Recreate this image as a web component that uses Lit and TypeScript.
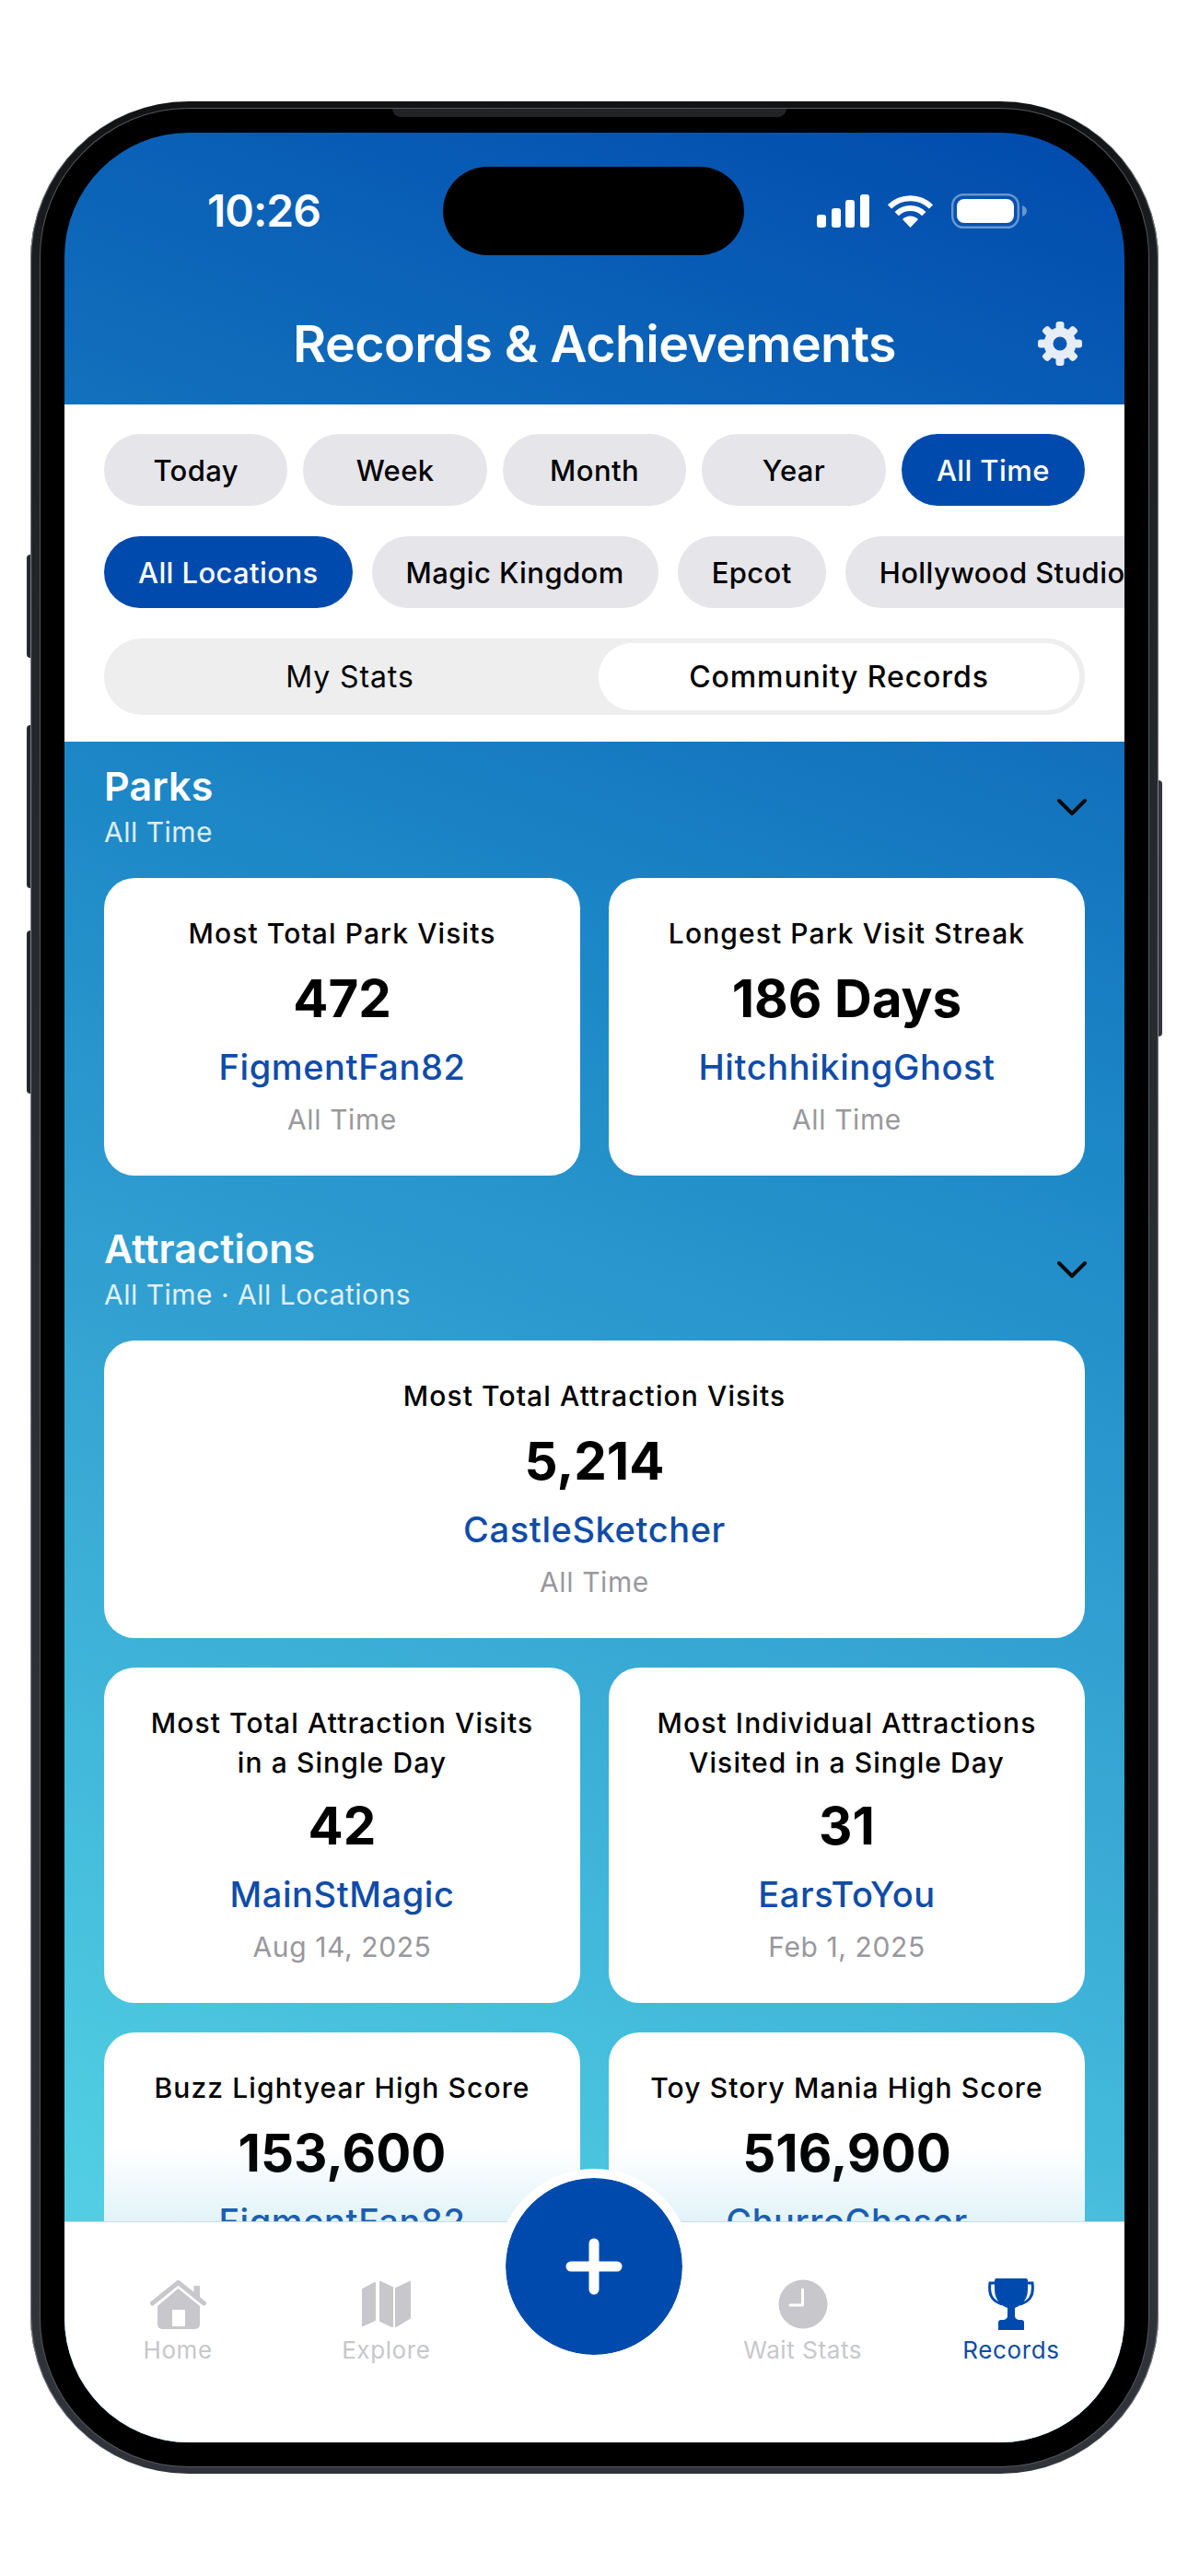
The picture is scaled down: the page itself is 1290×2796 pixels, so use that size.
import { LitElement, html, css, svg } from "lit";
import { customElement } from "lit/decorators.js";

const gearTeeth = [0, 45, 90, 135, 180, 225, 270, 315];

interface Rec { title: string[]; value: string; name: string; sub: string; }

const parks: Rec[] = [
  { title: ["Most Total Park Visits"], value: "472", name: "FigmentFan82", sub: "All Time" },
  { title: ["Longest Park Visit Streak"], value: "186 Days", name: "HitchhikingGhost", sub: "All Time" },
];
const big: Rec = { title: ["Most Total Attraction Visits"], value: "5,214", name: "CastleSketcher", sub: "All Time" };
const attractions: Rec[] = [
  { title: ["Most Total Attraction Visits", "in a Single Day"], value: "42", name: "MainStMagic", sub: "Aug 14, 2025" },
  { title: ["Most Individual Attractions", "Visited in a Single Day"], value: "31", name: "EarsToYou", sub: "Feb 1, 2025" },
  { title: ["Buzz Lightyear High Score"], value: "153,600", name: "FigmentFan82", sub: "All Time" },
  { title: ["Toy Story Mania High Score"], value: "516,900", name: "ChurroChaser", sub: "All Time" },
];

@customElement("app-root")
export class AppRoot extends LitElement {
  static styles = css`
    :host {
      display: block;
      width: 1290px;
      height: 2796px;
      background: #fff;
      font-family: Inter, "Liberation Sans", sans-serif;
      padding: 110px 0 0 33px;
      box-sizing: border-box;
      overflow: hidden;
      color: #000;
    }
    .device {
      position: relative;
      width: 1225px;
      height: 2575px;
      box-sizing: border-box;
      padding: 8px 11px;
      border-radius: 172px;
      background: linear-gradient(180deg, #111214 0%, #1e2023 8%, #2b2e33 50%, #30333a 100%);
      box-shadow: inset 2px 0 1px -1px #85878c, inset -2px 0 1px -1px #85878c;
    }
    .btn {
      position: absolute;
      background: #26282c;
      border-radius: 4px 0 0 4px;
      left: -4px;
      width: 4px;
    }
    .b1 { top: 492px; height: 112px; }
    .b2 { top: 677px; height: 177px; }
    .b3 { top: 900px; height: 177px; }
    .b4 { left: auto; right: -4px; top: 737px; height: 278px; border-radius: 0 4px 4px 0; background: #33363b; }
    .bezel {
      position: relative;
      height: 100%;
      box-sizing: border-box;
      padding: 26px;
      background: #000;
      border-radius: 161px;
      box-shadow: 0 0 0 1px #55575b;
    }
    .speaker {
      position: absolute;
      top: 0;
      left: 382px;
      width: 428px;
      height: 9px;
      background: #222326;
      border-radius: 0 0 12px 12px;
    }
    .screen {
      position: relative;
      height: 100%;
      display: flex;
      flex-direction: column;
      overflow: hidden;
      border-radius: 135px;
      background: linear-gradient(200deg, #004aad 0%, #1c86c6 37%, #35a5d3 60%, #5adce8 100%);
    }
    .island {
      position: absolute;
      top: 37px;
      left: 411px;
      width: 327px;
      height: 96px;
      border-radius: 48px;
      background: #000;
    }
    .header { flex: none; height: 295px; color: #fff; }
    .status {
      display: flex;
      justify-content: space-between;
      align-items: center;
      height: 36px;
      padding: 67px 106px 0 155px;
    }
    .time { font-size: 48px; font-weight: 600; line-height: 36px; letter-spacing: -1px; }
    .status-icons { display: flex; align-items: center; gap: 19px; }
    .status-icons svg { display: block; }
    .title-row {
      display: grid;
      grid-template-columns: 1fr auto 1fr;
      align-items: center;
      height: 132px;
      margin-top: 60px;
      padding-right: 46px;
      padding-left: 46px;
    }
    .title { grid-column: 2; font-size: 55.5px; font-weight: 600; letter-spacing: -0.6px; white-space: nowrap; padding-bottom: 2px; }
    .gear { grid-column: 3; justify-self: end; display: block; }

    .panel {
      flex: none;
      height: 366px;
      box-sizing: border-box;
      background: #fff;
      padding: 32px 0 0 43px;
      overflow: hidden;
    }
    .pills { display: flex; gap: 17px; width: 1065px; }
    .pills.loc { gap: 21px; width: auto; margin-top: 33px; }
    .pill {
      flex: none;
      height: 78px;
      display: flex;
      align-items: center;
      justify-content: center;
      border-radius: 39px;
      background: #e5e5ea;
      font-size: 31px;
      letter-spacing: 0.4px;
      font-weight: 500;
      white-space: nowrap;
    }
    .pills:not(.loc) .pill { flex: 1 1 0; }
    .loc .pill { padding: 0 37px; }
    .pill.on { background: #004aad; color: #fff; }
    .segment {
      display: grid;
      grid-template-columns: 537px 522px;
      width: 1065px;
      height: 83px;
      box-sizing: border-box;
      padding: 5px 6px 5px 0;
      margin-top: 33px;
      border-radius: 41px;
      background: #eeeeef;
      font-size: 32px;
      letter-spacing: 0.9px;
      font-weight: 500;
    }
    .segment div { display: flex; align-items: center; justify-content: center; border-radius: 36px; }
    .segment .on { background: #fff; }
    .segment .off { font-weight: 400; padding-right: 3px; }

    .content {
      flex: 1 1 0;
      min-height: 0;
      overflow: hidden;
      position: relative;
      padding: 23px 42px 0 43px;
    }
    .fade {
      position: absolute;
      left: 0;
      right: 0;
      top: 1525px;
      height: 82px;
      background: linear-gradient(180deg, rgba(90, 200, 225, 0), rgba(90, 190, 220, 0.18));
    }
    .sec-head {
      display: flex;
      align-items: center;
      justify-content: space-between;
      color: #fff;
      margin-bottom: 29px;
    }
    .sec-title { font-size: 43px; font-weight: 600; line-height: 50px; letter-spacing: 0.1px; }
    .sec-sub { font-size: 30px; letter-spacing: 0.5px; line-height: 42px; margin-top: 4px; opacity: 0.85; }
    .chev { display: block; margin-right: -2px; }
    .grid { display: grid; grid-template-columns: 517px 517px; gap: 32px 31px; }
    .grid + .sec-head { margin-top: 54px; }
    .card {
      background: #fff;
      border-radius: 33px;
      padding: 39px 10px 40px;
      text-align: center;
    }
    .card.wide { grid-column: 1 / span 2; }
    .c-title { font-size: 30px; letter-spacing: 1.1px; font-weight: 500; line-height: 43px; white-space: nowrap; }
    .c-value { font-size: 56.5px; font-weight: 700; line-height: 72px; margin-top: 13px; }
    .two .c-value { margin-top: 11px; }
    .c-name { font-size: 38px; letter-spacing: 0.6px; font-weight: 500; line-height: 50px; margin-top: 13px; color: #0f4ca8; }
    .c-sub { font-size: 30px; letter-spacing: 0.6px; line-height: 42px; margin-top: 11px; color: #98989d; }

    .tabbar {
      position: relative;
      flex: none;
      height: 240px;
      box-sizing: border-box;
      background: #fff;
      padding: 61px 10px 0;
      display: flex;
      border-top: 1px solid #c9dbe2;
    }
    .tab {
      flex: 1 1 0;
      display: flex;
      flex-direction: column;
      align-items: center;
      font-size: 26px;
      letter-spacing: 0.6px;
      line-height: 30px;
      color: #c7c7cc;
    }
    .tab .ic { height: 56px; margin-bottom: 7px; display: flex; align-items: center; justify-content: center; }
    .tab svg { display: block; }
    .tab.active { color: #0f4ca8; }
    .fab {
      position: absolute;
      left: 469px;
      top: -58px;
      width: 192px;
      height: 192px;
      border: 10px solid #fff;
      border-radius: 50%;
      background: #004aad;
      background-clip: padding-box;
      display: flex;
      align-items: center;
      justify-content: center;
    }
  `;

  private card(r: Rec, wide = false) {
    return html`<div class="card ${wide ? "wide" : ""} ${r.title.length > 1 ? "two" : ""}">
      <div class="c-title">${r.title.map((t) => html`<div>${t}</div>`)}</div>
      <div class="c-value">${r.value}</div>
      <div class="c-name">${r.name}</div>
      <div class="c-sub">${r.sub}</div>
    </div>`;
  }

  private head(title: string, sub: string) {
    return html`<div class="sec-head">
      <div>
        <div class="sec-title">${title}</div>
        <div class="sec-sub">${sub}</div>
      </div>
      <svg class="chev" width="34" height="22" viewBox="0 0 34 22" fill="none" stroke="#0a0a0a" stroke-width="4" stroke-linecap="round" stroke-linejoin="round"><path d="M3 4 L17 18 L31 4" /></svg>
    </div>`;
  }

  render() {
    return html`<div class="device">
      <div class="btn b1"></div><div class="btn b2"></div><div class="btn b3"></div><div class="btn b4"></div>
      <div class="bezel">
        <div class="speaker"></div>
        <div class="screen">
          <div class="header">
            <div class="status">
              <div class="time">10:26</div>
              <div class="status-icons">
                <svg width="57" height="36" viewBox="0 0 57 36" fill="#fff">
                  <rect x="0" y="22" width="10" height="14" rx="3" />
                  <rect x="16" y="15" width="10" height="21" rx="3" />
                  <rect x="31" y="6" width="10" height="30" rx="3" />
                  <rect x="47" y="0" width="10" height="36" rx="3" />
                </svg>
                <svg width="51" height="36" viewBox="0 0 51 36" fill="none" stroke="#fff" stroke-width="6">
                  <path d="M3 13.4 A32 32 0 0 1 48 13.4" />
                  <path d="M10.7 21.2 A21 21 0 0 1 40.3 21.2" />
                  <path d="M25.5 36 L17 27 A12 12 0 0 1 34 27 Z" fill="#fff" stroke="none" />
                </svg>
                <svg width="82" height="38" viewBox="0 0 82 38" fill="none">
                  <rect x="1.2" y="1.2" width="71.6" height="35.6" rx="12" stroke="#fff" stroke-opacity="0.4" stroke-width="2.4" />
                  <rect x="6" y="6" width="62" height="26" rx="8" fill="#fff" />
                  <path d="M77 13 C80 14 82 16 82 19 C82 22 80 24 77 25 Z" fill="#fff" fill-opacity="0.4" />
                </svg>
              </div>
            </div>
            <div class="title-row">
              <div class="title">Records &amp; Achievements</div>
              <svg class="gear" width="48" height="48" viewBox="0 0 48 48" fill="none">
                <circle cx="24" cy="24" r="12.5" stroke="#e6edf7" stroke-width="10" />
                ${gearTeeth.map((a) => svg`<rect x="19.5" y="0" width="9" height="10" rx="3" fill="#e6edf7" transform="rotate(${a} 24 24)" />`)}
              </svg>
            </div>
          </div>

          <div class="panel">
            <div class="pills">
              <div class="pill">Today</div>
              <div class="pill">Week</div>
              <div class="pill">Month</div>
              <div class="pill">Year</div>
              <div class="pill on">All Time</div>
            </div>
            <div class="pills loc">
              <div class="pill on">All Locations</div>
              <div class="pill">Magic Kingdom</div>
              <div class="pill">Epcot</div>
              <div class="pill">Hollywood Studios</div>
            </div>
            <div class="segment">
              <div class="off">My Stats</div>
              <div class="on">Community Records</div>
            </div>
          </div>

          <div class="content">
            ${this.head("Parks", "All Time")}
            <div class="grid">${parks.map((r) => this.card(r))}</div>
            ${this.head("Attractions", "All Time · All Locations")}
            <div class="grid">
              ${this.card(big, true)}
              ${attractions.map((r) => this.card(r))}
            </div>
            <div class="fade"></div>
          </div>

          <div class="tabbar">
            <div class="tab">
              <div class="ic">
                <svg width="61" height="53" viewBox="0 0 61 53">
                  <path d="M47.5 6 H54 V20 H47.5 Z" fill="#c7c7cc" />
                  <path d="M8 28 L30.5 9 L54 28 V48 A5 5 0 0 1 49 53 H13 A5 5 0 0 1 8 48 Z" fill="#c7c7cc" />
                  <path d="M2.5 25 L30.5 2.5 L58.5 25" fill="none" stroke="#c7c7cc" stroke-width="5" stroke-linecap="round" stroke-linejoin="round" />
                  <rect x="24" y="32" width="14" height="18" fill="#fff" />
                </svg>
              </div>
              Home
            </div>
            <div class="tab">
              <div class="ic">
                <svg width="54" height="50" viewBox="0 0 54 50" fill="#c7c7cc" stroke="#c7c7cc" stroke-width="2" stroke-linejoin="round">
                  <path d="M2 9 L15 2 V42 L2 48 Z" />
                  <path d="M21 1 L34 7 V49 L21 43 Z" />
                  <path d="M38 8 L53 1 V40 L38 49 Z" />
                </svg>
              </div>
              Explore
            </div>
            <div class="tab"></div>
            <div class="tab">
              <div class="ic">
                <svg width="54" height="54" viewBox="0 0 54 54">
                  <circle cx="27" cy="27" r="26.5" fill="#c7c7cc" />
                  <path d="M26.5 11 V28 H13" fill="none" stroke="#fff" stroke-width="3" stroke-linecap="round" stroke-linejoin="round" />
                </svg>
              </div>
              Wait Stats
            </div>
            <div class="tab active">
              <div class="ic">
                <svg width="50" height="56" viewBox="0 0 50 56">
                  <path d="M7 5 H2 C0 20 6 25 15 28" fill="none" stroke="#004aad" stroke-width="3" />
                  <path d="M43 5 H48 C50 20 44 25 35 28" fill="none" stroke="#004aad" stroke-width="3" />
                  <path d="M9 0 H41 Q43 0 43 2 V12 C43 24 35 30 29 32 V40 C29 43 30 44 33 45 H36 Q39 45 39 48 V56 H11 V48 Q11 45 14 45 H17 C20 44 21 43 21 40 V32 C15 30 7 24 7 12 V2 Q7 0 9 0 Z" fill="#004aad" />
                </svg>
              </div>
              Records
            </div>
            <div class="fab">
              <svg width="62" height="62" viewBox="0 0 62 62" stroke="#fff" stroke-width="11" stroke-linecap="round"><path d="M31 6 V56 M6 31 H56" /></svg>
            </div>
          </div>
          <div class="island"></div>
        </div>
      </div>
    </div>`;
  }
}
